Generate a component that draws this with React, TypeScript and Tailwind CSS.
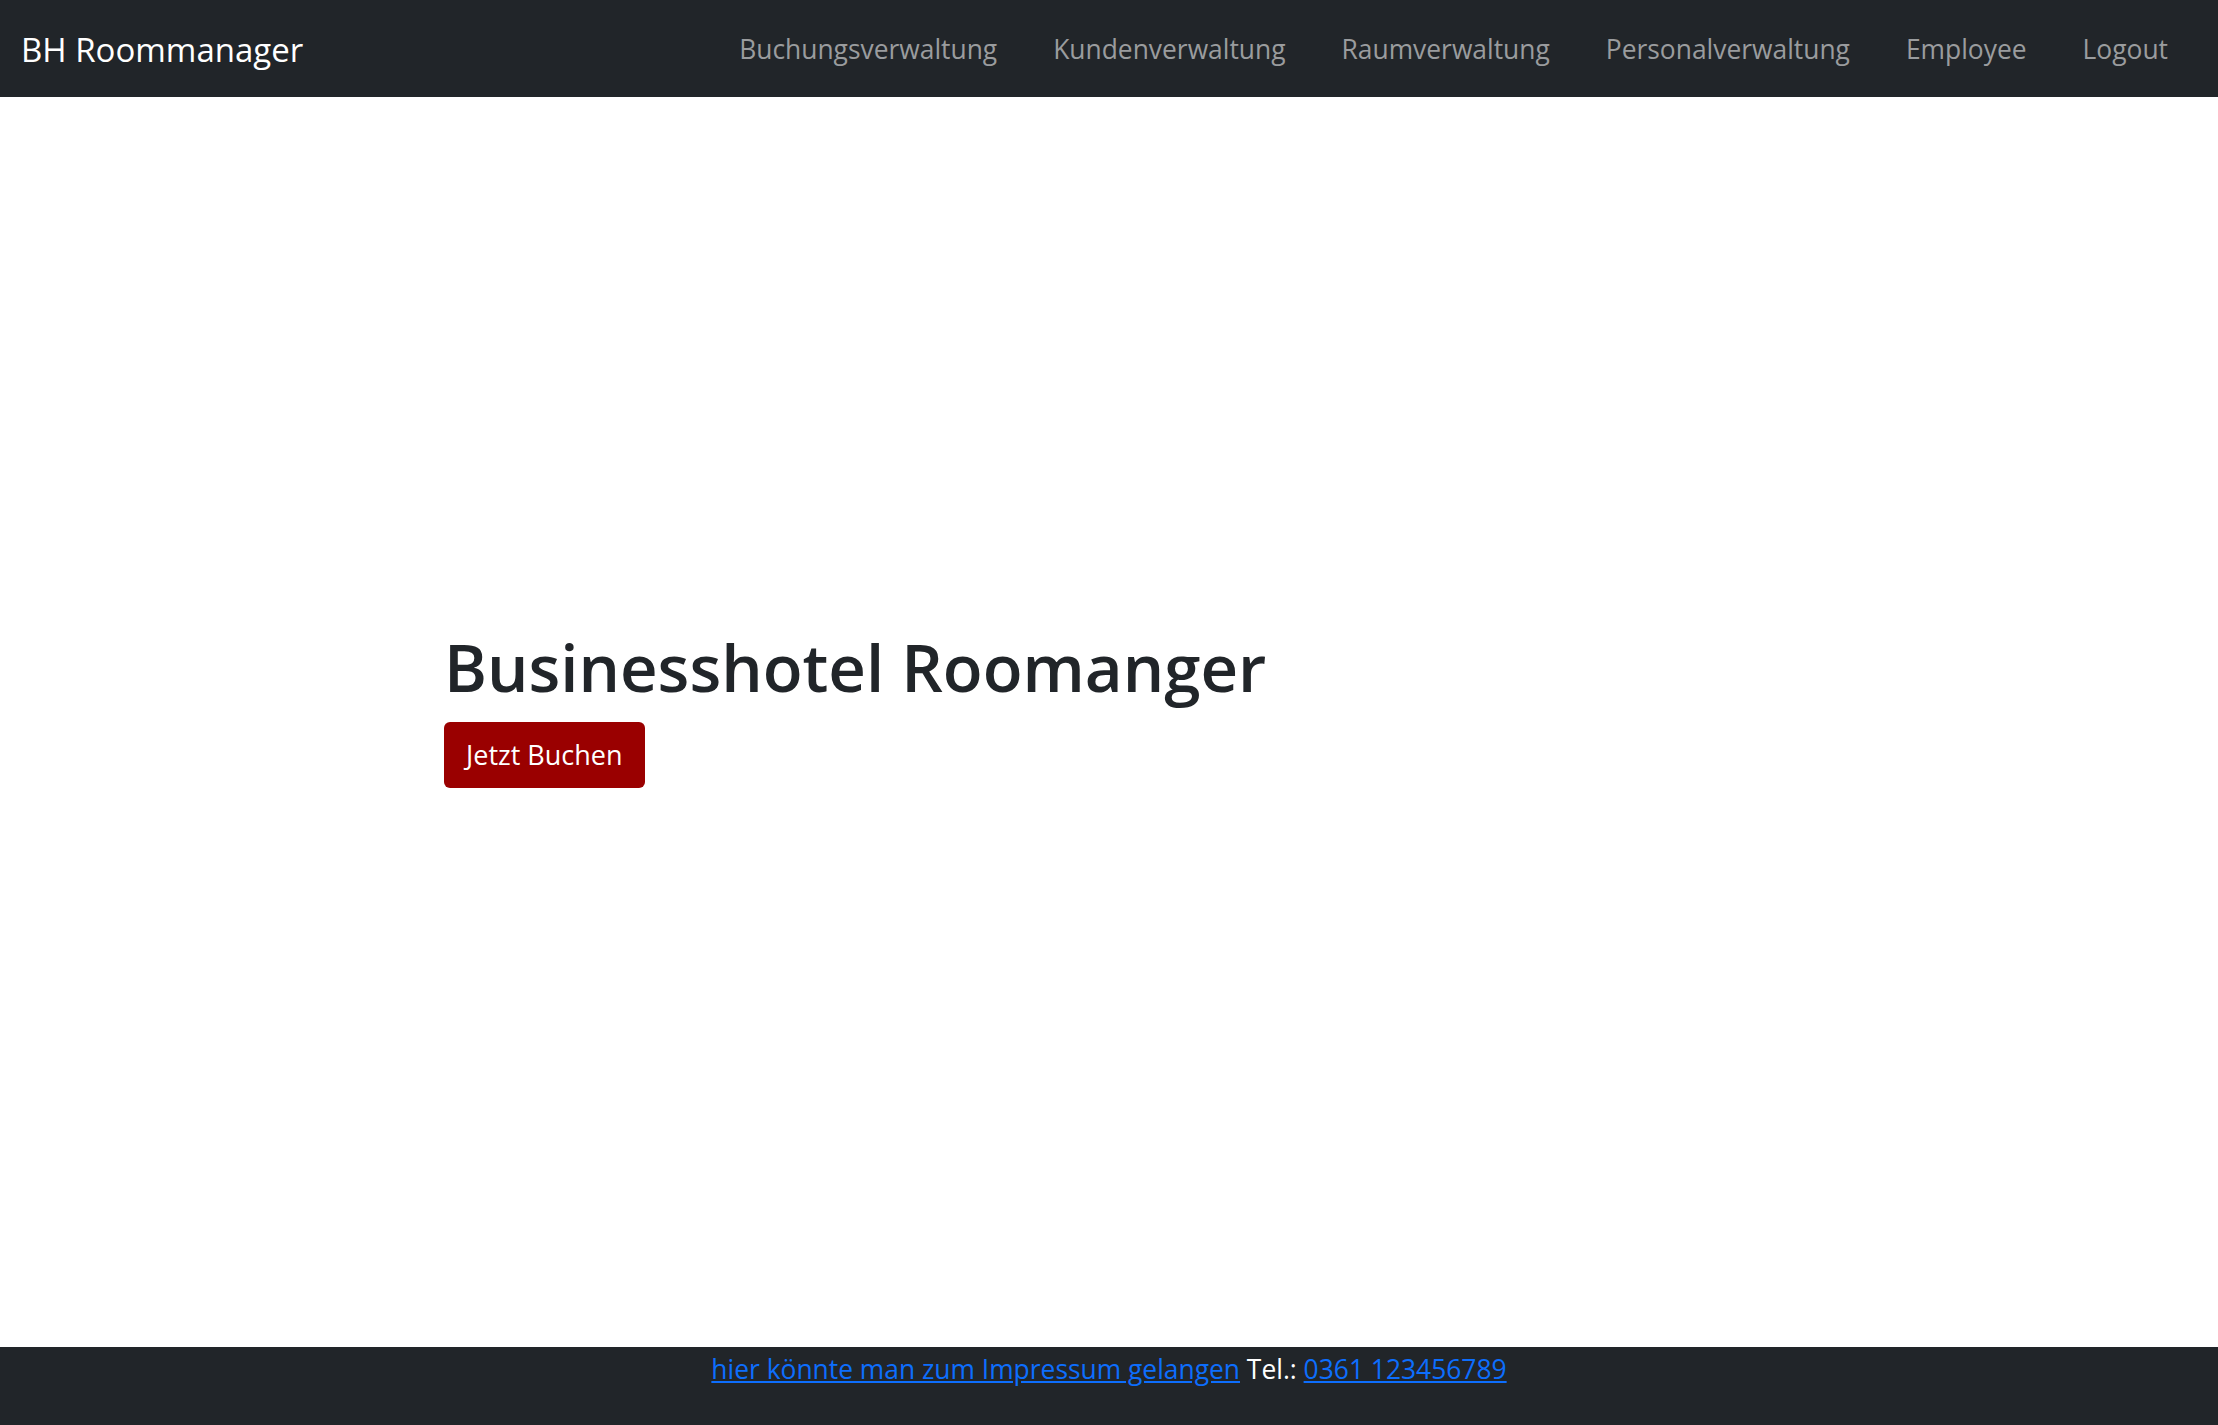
export default function App() {
    const links = ['Buchungsverwaltung', 'Kundenverwaltung', 'Raumverwaltung', 'Personalverwaltung', 'Employee', 'Logout']

    return (
        <div className="flex flex-col h-screen bg-white font-['Open_Sans',sans-serif]">
            <nav className="h-[97px] shrink-0 bg-[#212529] flex items-center justify-between pl-[21px] pr-[22px] pt-[2px]">
                <a href="#" className="text-white text-[33px] leading-none">BH Roommanager</a>
                <ul className="flex items-center">
                    {links.map((link) => (
                        <li key={link}>
                            <a href="#" className="block px-[28px] text-[26.4px] text-[#9a9c9e]">
                                {link}
                            </a>
                        </li>
                    ))}
                </ul>
            </nav>

            <main className="flex-1 pl-[444px] pt-[531px]">
                <h1 className="text-[65.3px] leading-[1.2] font-semibold text-[#212529]">Businesshotel Roomanger</h1>
                <button className="mt-[16px] h-[66px] px-[22px] rounded-[6px] bg-[#9a0000] text-white text-[27px]">
                    Jetzt Buchen
                </button>
            </main>

            <footer className="h-[78px] shrink-0 bg-[#212529] text-center text-white text-[26.4px] leading-[42px] pt-[1px]">
                <a href="#" className="text-[#0d6efd] underline">hier könnte man zum Impressum gelangen</a>
                {' '}Tel.:{' '}
                <a href="#" className="text-[#0d6efd] underline">0361 123456789</a>
            </footer>
        </div>
    );
}
